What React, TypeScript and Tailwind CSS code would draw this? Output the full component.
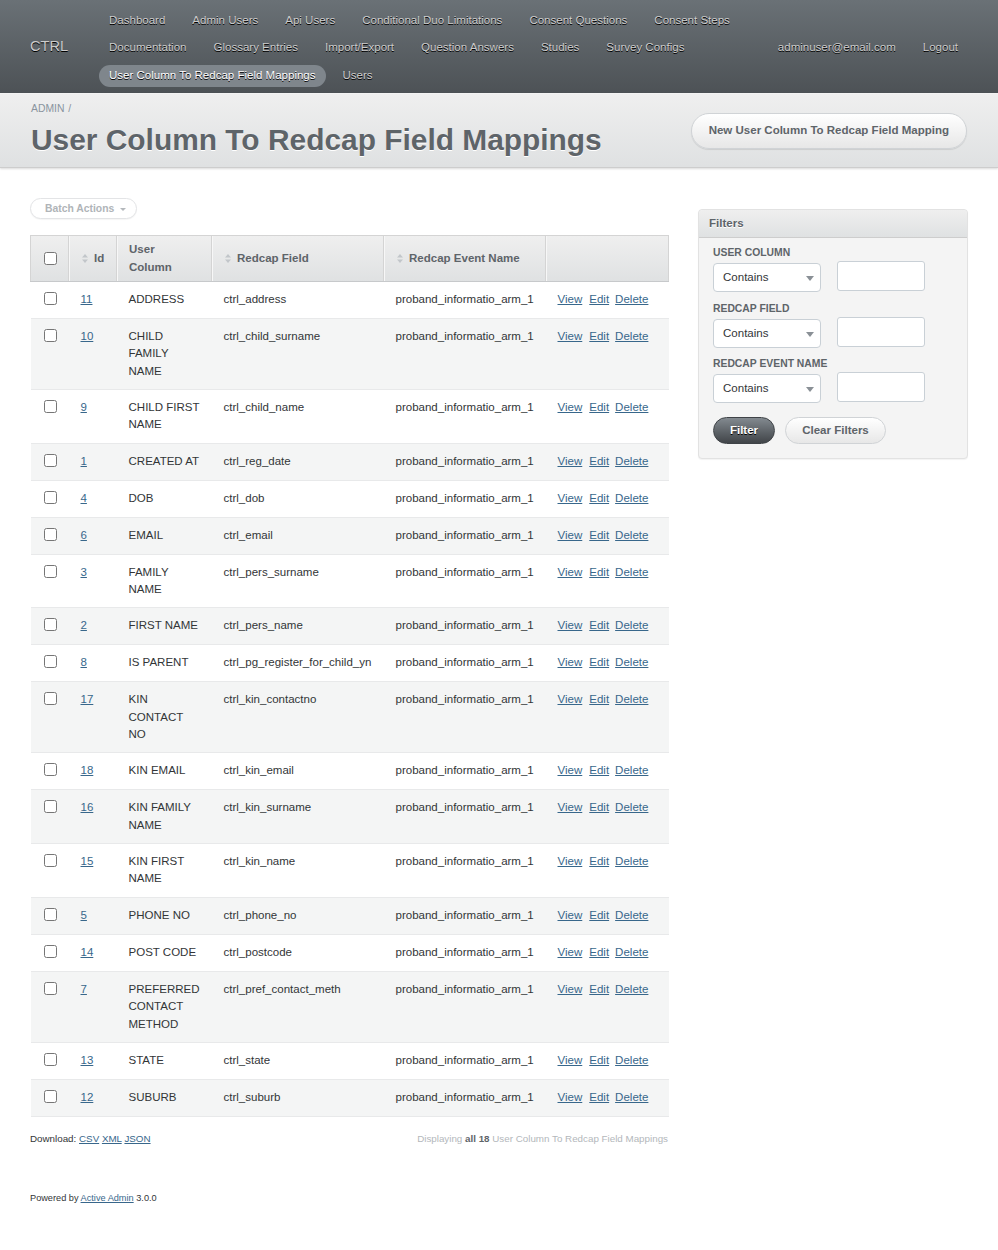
import React from "react";

const rows: [string, string, string][] = [
  ["11", "ADDRESS", "ctrl_address"],
  ["10", "CHILD FAMILY NAME", "ctrl_child_surname"],
  ["9", "CHILD FIRST NAME", "ctrl_child_name"],
  ["1", "CREATED AT", "ctrl_reg_date"],
  ["4", "DOB", "ctrl_dob"],
  ["6", "EMAIL", "ctrl_email"],
  ["3", "FAMILY NAME", "ctrl_pers_surname"],
  ["2", "FIRST NAME", "ctrl_pers_name"],
  ["8", "IS PARENT", "ctrl_pg_register_for_child_yn"],
  ["17", "KIN CONTACT NO", "ctrl_kin_contactno"],
  ["18", "KIN EMAIL", "ctrl_kin_email"],
  ["16", "KIN FAMILY NAME", "ctrl_kin_surname"],
  ["15", "KIN FIRST NAME", "ctrl_kin_name"],
  ["5", "PHONE NO", "ctrl_phone_no"],
  ["14", "POST CODE", "ctrl_postcode"],
  ["7", "PREFERRED CONTACT METHOD", "ctrl_pref_contact_meth"],
  ["13", "STATE", "ctrl_state"],
  ["12", "SUBURB", "ctrl_suburb"],
];

function SortIcon() {
  return (
    <svg width="6" height="9" viewBox="0 0 6 9" className="shrink-0">
      <path d="M3 0 L6 3.5 L0 3.5 Z" fill="#c2c6ca" />
      <path d="M3 9 L6 5.5 L0 5.5 Z" fill="#c2c6ca" />
    </svg>
  );
}

function Check() {
  return <input type="checkbox" className="m-0 h-[13px] w-[13px] align-top" readOnly />;
}

const navRow1 = ["Dashboard", "Admin Users", "Api Users", "Conditional Duo Limitations", "Consent Questions", "Consent Steps"];
const navRow2 = ["Documentation", "Glossary Entries", "Import/Export", "Question Answers", "Studies", "Survey Configs"];

function NavLink({ label, active }: { label: string; active?: boolean }) {
  return (
    <span
      className={
        "flex h-[22px] items-center rounded-full px-[10px] whitespace-nowrap " +
        (active ? "bg-[#7f868c] text-white" : "text-[#cdcdcd]")
      }
    >
      {label}
    </span>
  );
}

function Select() {
  return (
    <div className="relative mt-[2px] flex h-[29px] w-[108px] items-center rounded-[4px] border border-[#c9d0d6] bg-white pl-[9px] text-[11.52px] text-[#323537]">
      Contains
      <svg width="8" height="5" viewBox="0 0 8 5" className="absolute right-[6px] top-[12px]">
        <path d="M0 0 L8 0 L4 5 Z" fill="#8a9096" />
      </svg>
    </div>
  );
}

function FilterGroup({ label, mt }: { label: string; mt: string }) {
  return (
    <div className={mt}>
      <div className="text-[10.37px] font-bold uppercase leading-[12px] text-[#5e6469]">{label}</div>
      <div className="mt-[2px] flex items-start gap-[16px]">
        <Select />
        <div className="h-[30px] w-[88px] rounded-[3px] border border-[#c9d0d6] bg-white"></div>
      </div>
    </div>
  );
}

export default function App() {
  return (
    <div className="min-h-[1250px] bg-white font-['Liberation_Sans',Arial,sans-serif] text-[11.52px] text-[#323537]">
      {/* Header */}
      <div className="flex h-[93px] bg-gradient-to-b from-[#6a7176] to-[#4d5256] [text-shadow:#000_0_1px_0]">
        <div className="flex w-[99px] shrink-0 items-center pl-[30px] text-[14.6px] text-[#cdcdcd]">CTRL</div>
        <div className="flex flex-1 flex-col pt-[10px] text-[11.52px]">
          <div className="flex gap-[7px]">
            {navRow1.map((l) => (
              <NavLink key={l} label={l} />
            ))}
          </div>
          <div className="mt-[5px] flex items-center">
            <div className="flex gap-[7px]">
              {navRow2.map((l) => (
                <NavLink key={l} label={l} />
              ))}
            </div>
            <div className="ml-auto mr-[30px] flex gap-[7px]">
              <NavLink label="adminuser@email.com" />
              <NavLink label="Logout" />
            </div>
          </div>
          <div className="mt-[6px] flex gap-[7px]">
            <NavLink label="User Column To Redcap Field Mappings" active />
            <NavLink label="Users" />
          </div>
        </div>
      </div>

      {/* Title bar */}
      <div className="flex h-[75px] items-center justify-between border-b border-t border-b-[#cdcdcd] border-t-[#f3f3f3] bg-gradient-to-b from-[#efefef] to-[#dfe1e2] pl-[31px] pr-[31px] shadow-[0_1px_2px_rgba(0,0,0,0.15)]">
        <div className="flex flex-col self-start pt-[10px]">
          <div className="text-[10.37px] uppercase leading-[10px] text-[#8a949e]">
            Admin <span className="ml-[1px]">/</span>
          </div>
          <h2 className="mt-[9px] text-[29.9px] font-bold leading-[34px] text-[#5e6469] [text-shadow:#fff_0_1px_0]">
            User Column To Redcap Field Mappings
          </h2>
        </div>
        <div className="flex h-[36px] items-center rounded-full border border-[#d0d3d6] bg-gradient-to-b from-white to-[#e7e7e7] px-[17px] text-[11.52px] font-bold text-[#5e6469] shadow-[0_1px_1px_rgba(0,0,0,0.1)]">
          New User Column To Redcap Field Mapping
        </div>
      </div>

      {/* Main */}
      <div className="flex px-[30px] pt-[30px]">
        <div className="w-[638px] shrink-0">
          <div className="flex h-[21px] w-[107px] items-center rounded-full border border-[#e3e4e6] bg-white pl-[14px] text-[10.37px] font-bold text-[#b0b4b8] shadow-[0_1px_1px_rgba(0,0,0,0.04)]">
            Batch Actions
            <svg width="6" height="3" viewBox="0 0 6 3" className="ml-[6px] mt-[1px]">
              <path d="M0 0 L6 0 L3 3 Z" fill="#b4b8bc" />
            </svg>
          </div>

          <table className="mt-[16px] w-[638px] table-fixed border-collapse">
            <colgroup>
              <col className="w-[38px]" />
              <col className="w-[48px]" />
              <col className="w-[95px]" />
              <col className="w-[172px]" />
              <col className="w-[162px]" />
              <col className="w-[123px]" />
            </colgroup>
            <thead>
              <tr className="h-[46px] bg-gradient-to-b from-[#efefef] to-[#dfe1e2] text-left text-[#5e6469]">
                <th className="border border-[#d4d4d4] border-b-[#c7c9cb] pl-[13px] align-middle font-normal">
                  <div className="flex h-[14px] items-center">
                    <Check />
                  </div>
                </th>
                <th className="border border-[#d4d4d4] border-b-[#c7c9cb] pl-[13px] font-bold shadow-[inset_1px_0_0_#f7f7f7]">
                  <div className="flex items-center gap-[6px]">
                    <SortIcon />
                    Id
                  </div>
                </th>
                <th className="border border-[#d4d4d4] border-b-[#c7c9cb] pl-[12px] font-bold leading-[17.5px] shadow-[inset_1px_0_0_#f7f7f7]">
                  User
                  <br />
                  Column
                </th>
                <th className="border border-[#d4d4d4] border-b-[#c7c9cb] pl-[13px] font-bold shadow-[inset_1px_0_0_#f7f7f7]">
                  <div className="flex items-center gap-[6px]">
                    <SortIcon />
                    Redcap Field
                  </div>
                </th>
                <th className="border border-[#d4d4d4] border-b-[#c7c9cb] pl-[13px] font-bold shadow-[inset_1px_0_0_#f7f7f7]">
                  <div className="flex items-center gap-[6px]">
                    <SortIcon />
                    Redcap Event Name
                  </div>
                </th>
                <th className="border border-[#d4d4d4] border-b-[#c7c9cb] shadow-[inset_1px_0_0_#f7f7f7]"></th>
              </tr>
            </thead>
            <tbody>
              {rows.map(([id, col, field], i) => (
                <tr
                  key={id}
                  className={
                    "border-b border-[#e8e9ea] align-top leading-[17.35px] " +
                    (i % 2 === 0 ? "bg-white" : "bg-[#f4f5f5]")
                  }
                >
                  <td className="pb-[9px] pl-[13px] pt-[9px]">
                    <div className="flex h-[18px] items-start pt-[1px]">
                      <Check />
                    </div>
                  </td>
                  <td className="pb-[9px] pl-[12px] pt-[9px]">
                    <a className="text-[#38678b] underline">{id}</a>
                  </td>
                  <td className="pb-[9px] pl-[12px] pr-[8px] pt-[9px]">{col}</td>
                  <td className="pb-[9px] pl-[12px] pt-[9px]">{field}</td>
                  <td className="pb-[9px] pl-[12px] pt-[9px] whitespace-nowrap">proband_informatio_arm_1</td>
                  <td className="pb-[9px] pl-[12px] pt-[9px] whitespace-nowrap">
                    <a className="mr-[7px] text-[#38678b] underline">View</a>
                    <a className="mr-[6px] text-[#38678b] underline">Edit</a>
                    <a className="text-[#38678b] underline">Delete</a>
                  </td>
                </tr>
              ))}
            </tbody>
          </table>

          <div className="mt-[15px] flex items-center justify-between text-[9.8px]">
            <div className="text-[#323537]">
              Download: <a className="text-[#38678b] underline">CSV</a>{" "}
              <a className="text-[#38678b] underline">XML</a>{" "}
              <a className="text-[#38678b] underline">JSON</a>
            </div>
            <div className="text-[#b3b7bb]">
              Displaying <b className="text-[#5e6469]">all 18</b> User Column To Redcap Field Mappings
            </div>
          </div>

          <div className="mt-[45px] text-[9.2px] text-[#323537]">
            Powered by <a className="text-[#38678b] underline">Active Admin</a> 3.0.0
          </div>
        </div>

        {/* Sidebar */}
        <div className="ml-[30px] w-[270px] pt-[11px]">
          <div className="rounded-[4px] border border-[#e2e2e2] bg-[#f4f4f4] pb-[14px] shadow-[0_1px_1px_rgba(0,0,0,0.05)]">
            <div className="flex h-[28px] items-center rounded-t-[4px] border-b border-[#cdcdcd] bg-gradient-to-b from-[#efefef] to-[#dfe1e2] pl-[10px] text-[11.52px] font-bold text-[#5e6469] [text-shadow:#fff_0_1px_0]">
              Filters
            </div>
            <div className="pl-[14px]">
              <FilterGroup label="User Column" mt="mt-[9px]" />
              <FilterGroup label="Redcap Field" mt="mt-[11px]" />
              <FilterGroup label="Redcap Event Name" mt="mt-[10px]" />
              <div className="mt-[14px] flex items-center gap-[10px]">
                <div className="flex h-[27px] w-[62px] items-center justify-center rounded-full border border-[#3f4347] bg-gradient-to-b from-[#838a90] to-[#414549] text-[11.52px] font-bold text-white [text-shadow:#000_0_1px_0]">
                  Filter
                </div>
                <div className="flex h-[27px] w-[101px] items-center justify-center rounded-full border border-[#d0d3d6] bg-gradient-to-b from-white to-[#e7e7e7] text-[11.52px] font-bold text-[#5e6469]">
                  Clear Filters
                </div>
              </div>
            </div>
          </div>
        </div>
      </div>
    </div>
  );
}
